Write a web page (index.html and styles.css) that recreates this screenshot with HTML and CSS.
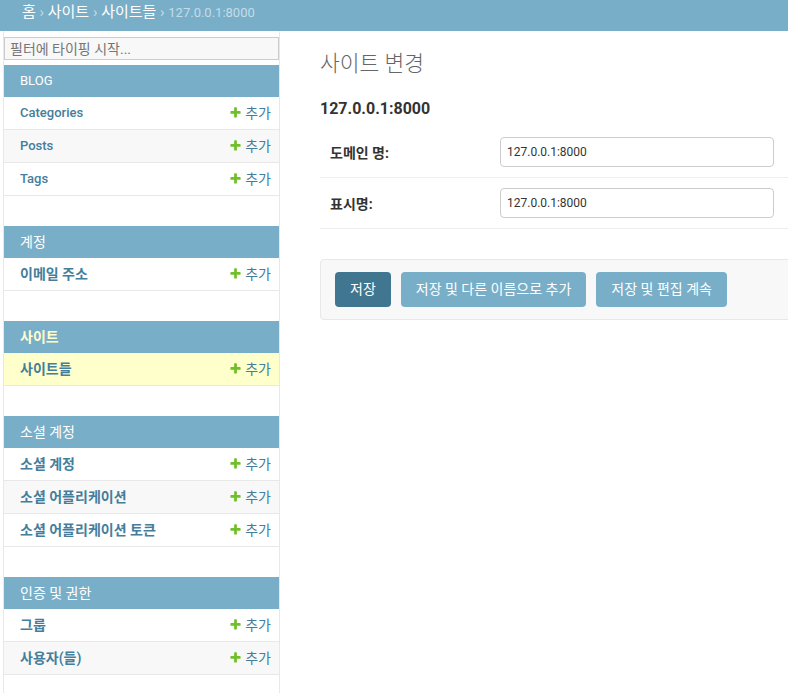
FILE: index.html
```html
<!DOCTYPE html>
<html lang="ko">
<head>
<meta charset="utf-8">
<title>사이트 변경</title>
<link rel="stylesheet" href="styles.css">
</head>
<body>
<div class="page">
  <div class="breadcrumbs"><a href="#">홈</a> › <a href="#">사이트</a> › <a href="#">사이트들</a> › <span class="current">127.0.0.1:8000</span></div>
  <div class="main">
    <div class="toggle"></div>
    <nav class="sidebar">
      <input class="nav-filter" type="search" placeholder="필터에 타이핑 시작...">

      <div class="module">
        <div class="module-title en">BLOG</div>
        <div class="model-row"><a class="model-name en" href="#">Categories</a><a class="addlink" href="#"><svg class="plus" viewBox="0 0 1792 1792"><path d="M1600 796v192q0 40-28 68t-68 28h-416v416q0 40-28 68t-68 28h-192q-40 0-68-28t-28-68v-416h-416q-40 0-68-28t-28-68v-192q0-40 28-68t68-28h416v-416q0-40 28-68t68-28h192q40 0 68 28t28 68v416h416q40 0 68 28t28 68z"/></svg>추가</a></div>
        <div class="model-row alt"><a class="model-name en" href="#">Posts</a><a class="addlink" href="#"><svg class="plus" viewBox="0 0 1792 1792"><path d="M1600 796v192q0 40-28 68t-68 28h-416v416q0 40-28 68t-68 28h-192q-40 0-68-28t-28-68v-416h-416q-40 0-68-28t-28-68v-192q0-40 28-68t68-28h416v-416q0-40 28-68t68-28h192q40 0 68 28t28 68v416h416q40 0 68 28t28 68z"/></svg>추가</a></div>
        <div class="model-row"><a class="model-name en" href="#">Tags</a><a class="addlink" href="#"><svg class="plus" viewBox="0 0 1792 1792"><path d="M1600 796v192q0 40-28 68t-68 28h-416v416q0 40-28 68t-68 28h-192q-40 0-68-28t-28-68v-416h-416q-40 0-68-28t-28-68v-192q0-40 28-68t68-28h416v-416q0-40 28-68t68-28h192q40 0 68 28t28 68v416h416q40 0 68 28t28 68z"/></svg>추가</a></div>
      </div>

      <div class="module">
        <div class="module-title">계정</div>
        <div class="model-row"><a class="model-name" href="#">이메일 주소</a><a class="addlink" href="#"><svg class="plus" viewBox="0 0 1792 1792"><path d="M1600 796v192q0 40-28 68t-68 28h-416v416q0 40-28 68t-68 28h-192q-40 0-68-28t-28-68v-416h-416q-40 0-68-28t-28-68v-192q0-40 28-68t68-28h416v-416q0-40 28-68t68-28h192q40 0 68 28t28 68v416h416q40 0 68 28t28 68z"/></svg>추가</a></div>
      </div>

      <div class="module">
        <div class="module-title current">사이트</div>
        <div class="model-row current"><a class="model-name" href="#">사이트들</a><a class="addlink" href="#"><svg class="plus" viewBox="0 0 1792 1792"><path d="M1600 796v192q0 40-28 68t-68 28h-416v416q0 40-28 68t-68 28h-192q-40 0-68-28t-28-68v-416h-416q-40 0-68-28t-28-68v-192q0-40 28-68t68-28h416v-416q0-40 28-68t68-28h192q40 0 68 28t28 68v416h416q40 0 68 28t28 68z"/></svg>추가</a></div>
      </div>

      <div class="module">
        <div class="module-title">소셜 계정</div>
        <div class="model-row"><a class="model-name" href="#">소셜 계정</a><a class="addlink" href="#"><svg class="plus" viewBox="0 0 1792 1792"><path d="M1600 796v192q0 40-28 68t-68 28h-416v416q0 40-28 68t-68 28h-192q-40 0-68-28t-28-68v-416h-416q-40 0-68-28t-28-68v-192q0-40 28-68t68-28h416v-416q0-40 28-68t68-28h192q40 0 68 28t28 68v416h416q40 0 68 28t28 68z"/></svg>추가</a></div>
        <div class="model-row alt"><a class="model-name" href="#">소셜 어플리케이션</a><a class="addlink" href="#"><svg class="plus" viewBox="0 0 1792 1792"><path d="M1600 796v192q0 40-28 68t-68 28h-416v416q0 40-28 68t-68 28h-192q-40 0-68-28t-28-68v-416h-416q-40 0-68-28t-28-68v-192q0-40 28-68t68-28h416v-416q0-40 28-68t68-28h192q40 0 68 28t28 68v416h416q40 0 68 28t28 68z"/></svg>추가</a></div>
        <div class="model-row"><a class="model-name" href="#">소셜 어플리케이션 토큰</a><a class="addlink" href="#"><svg class="plus" viewBox="0 0 1792 1792"><path d="M1600 796v192q0 40-28 68t-68 28h-416v416q0 40-28 68t-68 28h-192q-40 0-68-28t-28-68v-416h-416q-40 0-68-28t-28-68v-192q0-40 28-68t68-28h416v-416q0-40 28-68t68-28h192q40 0 68 28t28 68v416h416q40 0 68 28t28 68z"/></svg>추가</a></div>
      </div>

      <div class="module">
        <div class="module-title">인증 및 권한</div>
        <div class="model-row"><a class="model-name" href="#">그룹</a><a class="addlink" href="#"><svg class="plus" viewBox="0 0 1792 1792"><path d="M1600 796v192q0 40-28 68t-68 28h-416v416q0 40-28 68t-68 28h-192q-40 0-68-28t-28-68v-416h-416q-40 0-68-28t-28-68v-192q0-40 28-68t68-28h416v-416q0-40 28-68t68-28h192q40 0 68 28t28 68v416h416q40 0 68 28t28 68z"/></svg>추가</a></div>
        <div class="model-row alt"><a class="model-name" href="#">사용자(들)</a><a class="addlink" href="#"><svg class="plus" viewBox="0 0 1792 1792"><path d="M1600 796v192q0 40-28 68t-68 28h-416v416q0 40-28 68t-68 28h-192q-40 0-68-28t-28-68v-416h-416q-40 0-68-28t-28-68v-192q0-40 28-68t68-28h416v-416q0-40 28-68t68-28h192q40 0 68 28t28 68v416h416q40 0 68 28t28 68z"/></svg>추가</a></div>
      </div>
    </nav>

    <div class="content">
      <h1>사이트 변경</h1>
      <h2>127.0.0.1:8000</h2>
      <form>
        <fieldset class="aligned">
          <div class="form-row">
            <label for="id_domain">도메인 명:</label>
            <input class="vTextField" id="id_domain" type="text" value="127.0.0.1:8000">
          </div>
          <div class="form-row">
            <label for="id_name">표시명:</label>
            <input class="vTextField" id="id_name" type="text" value="127.0.0.1:8000">
          </div>
        </fieldset>
        <div class="submit-row">
          <button class="btn default" type="button">저장</button>
          <button class="btn" type="button">저장 및 다른 이름으로 추가</button>
          <button class="btn" type="button">저장 및 편집 계속</button>
        </div>
      </form>
    </div>
  </div>
</div>
</body>
</html>
```
FILE: styles.css
```css
* { box-sizing: border-box; }

html, body {
  margin: 0;
  padding: 0;
}

body {
  font-family: Roboto, "Noto Sans CJK KR", sans-serif;
  font-size: 14px;
  color: #333;
  background: #fff;
  width: 788px;
  height: 693px;
  overflow: hidden;
}

.page {
  width: 840px;
}

.breadcrumbs {
  background: #79aec8;
  color: #c4dce8;
  font-size: 15px;
  line-height: 20px;
  height: 31px;
  padding: 2px 22px 9px;
  white-space: nowrap;
}

.breadcrumbs a {
  color: #fff;
  text-decoration: none;
}

.breadcrumbs .current {
  font-size: 13px;
}

.main {
  display: flex;
  min-height: 662px;
}

.toggle {
  flex: 0 0 4px;
  border-right: 1px solid #e8e8e8;
}

.sidebar {
  flex: 0 0 276px;
  border-right: 1px solid #e8e8e8;
  border-top: 1px solid transparent;
}

.nav-filter {
  display: block;
  width: 100%;
  height: 23px;
  margin: 5px 0;
  padding: 2px 5px;
  border: 1px solid #ccc;
  background: #f8f8f8;
  font-family: inherit;
  font-size: 14px;
  color: #333;
  outline: none;
}

.nav-filter::placeholder {
  color: #757575;
}

.module {
  margin-bottom: 30px;
}

.module-title {
  background: #79aec8;
  color: #fff;
  font-size: 14px;
  line-height: 16px;
  padding: 8px 16px;
}

.module-title.en {
  font-size: 13px;
}

.module-title.current {
  color: #ffc;
  font-weight: 700;
}

.model-row {
  display: flex;
  justify-content: space-between;
  align-items: flex-start;
  padding: 8px 8px 8px 16px;
  font-size: 14px;
  line-height: 16px;
  border-bottom: 1px solid #e8e8e8;
  white-space: nowrap;
}

.model-row.alt {
  background: #f8f8f8;
}

.model-row.current {
  background: #ffc;
}

.model-name {
  color: #447e9b;
  font-weight: 600;
  text-decoration: none;
}

.model-name.en {
  font-size: 13px;
  font-weight: 500;
}

.addlink {
  display: inline-flex;
  align-items: center;
  gap: 3px;
  color: #447e9b;
  text-decoration: none;
}

.plus {
  width: 13px;
  height: 13px;
  fill: #70bf2b;
  margin-bottom: 2px;
}

.content {
  flex: 1;
  padding: 20px 40px;
}

.content h1 {
  margin: 0 0 22px;
  font-size: 21.5px;
  line-height: 26px;
  font-weight: 300;
  color: #666;
}

.content h2 {
  margin: 0 0 8px;
  font-size: 16px;
  line-height: 20px;
  font-weight: 700;
  color: #333;
}

.aligned {
  margin: 0 0 30px;
  padding: 0;
  border: 0;
  min-width: 0;
}

.form-row {
  display: flex;
  align-items: center;
  padding: 10px;
  border-bottom: 1px solid #eee;
}

.form-row label {
  flex: 0 0 170px;
  padding-right: 10px;
  font-size: 14px;
  font-weight: 700;
  color: #333;
}

.vTextField {
  width: 274px;
  height: 30px;
  padding: 5px 6px;
  border: 1px solid #ccc;
  border-radius: 4px;
  font-family: inherit;
  font-size: 12px;
  color: #333;
  background: #fff;
}

.submit-row {
  display: flex;
  gap: 10px;
  padding: 12px 14px;
  background: #f8f8f8;
  border: 1px solid #e8e8e8;
  border-radius: 4px;
}

.btn {
  height: 35px;
  padding: 0 15px;
  border: 0;
  border-radius: 4px;
  background: #79aec8;
  color: #fff;
  font-family: inherit;
  font-size: 14px;
  line-height: 15px;
}

.btn.default {
  background: #417690;
}
```
